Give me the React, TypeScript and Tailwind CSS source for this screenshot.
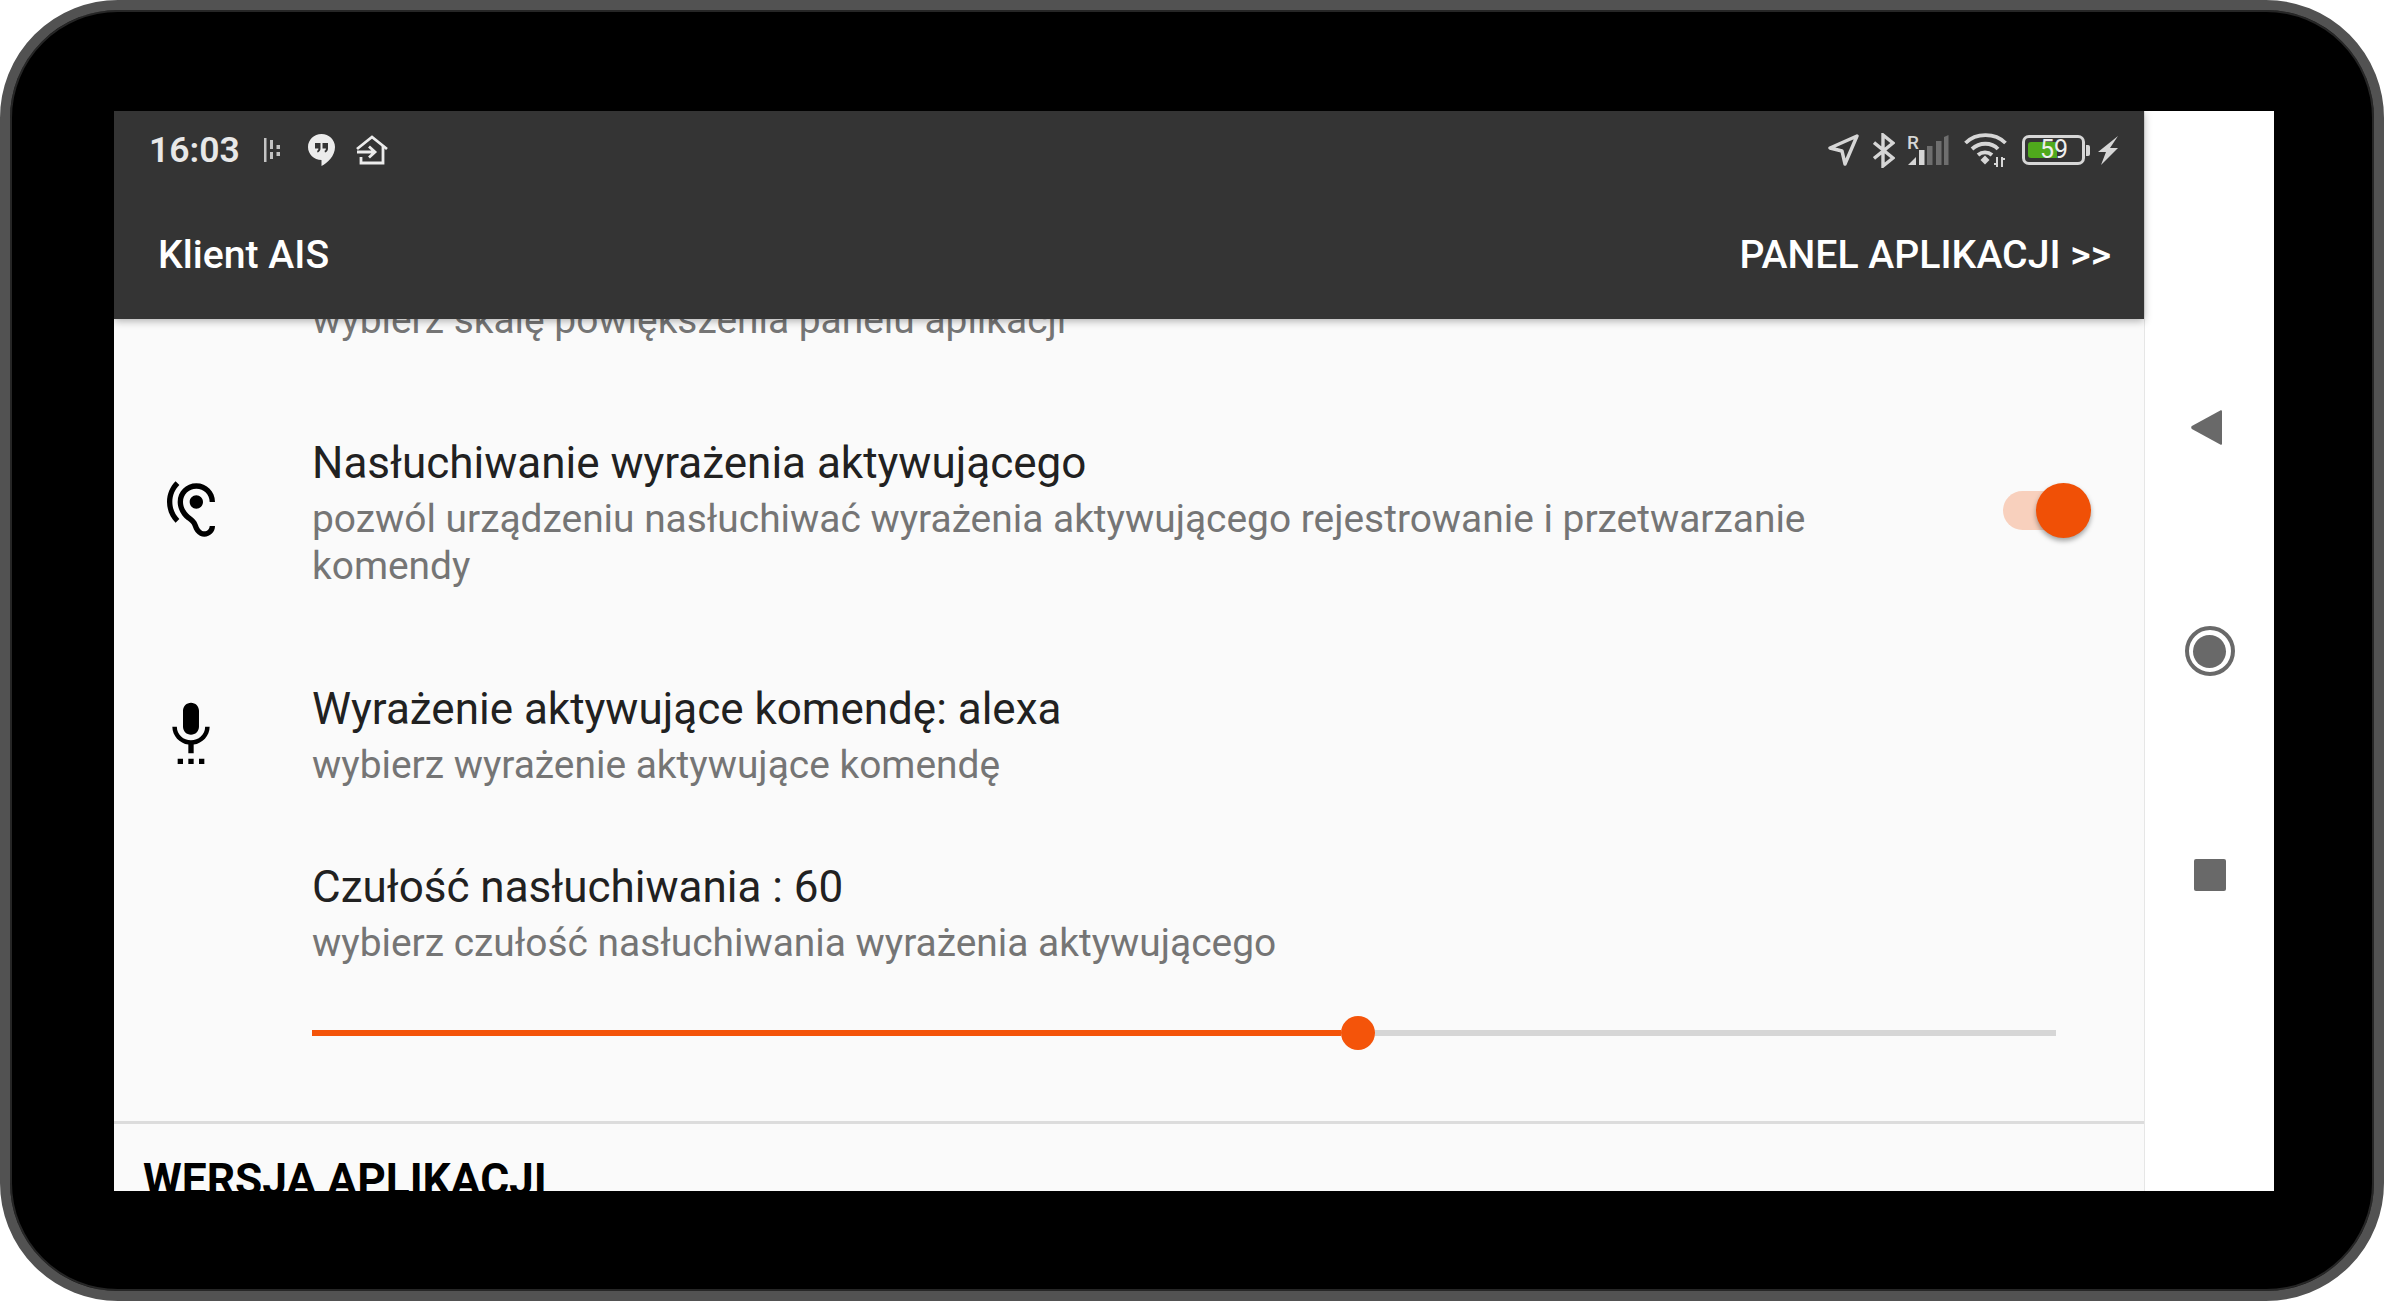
import React from "react";

const hearingPath =
  "M17 20c-.29 0-.56-.06-.76-.15-.71-.37-1.21-.88-1.71-2.38-.51-1.56-1.47-2.29-2.39-3-.79-.61-1.61-1.24-2.32-2.53C9.29 10.98 9 9.93 9 9c0-2.8 2.2-5 5-5s5 2.2 5 5h2c0-3.93-3.07-7-7-7S7 5.07 7 9c0 1.26.38 2.65 1.07 3.9.91 1.65 1.98 2.48 2.85 3.15.81.62 1.39 1.07 1.71 2.05.6 1.82 1.37 2.84 2.73 3.55.51.23 1.07.35 1.64.35 2.21 0 4-1.79 4-4h-2c0 1.1-.9 2-2 2zM7.64 2.64L6.22 1.22C4.23 3.21 3 5.96 3 9s1.23 5.79 3.22 7.78l1.41-1.41C6.01 13.74 5 11.49 5 9s1.01-4.74 2.64-6.36zM11.5 9c0 1.38 1.12 2.5 2.5 2.5s2.5-1.12 2.5-2.5-1.12-2.5-2.5-2.5-2.5 1.12-2.5 2.5z";
const voicePath =
  "M7 24h2v-2H7v2zm5-11c1.66 0 2.99-1.34 2.99-3L15 4c0-1.66-1.34-3-3-3S9 2.34 9 4v6c0 1.66 1.34 3 3 3zm-1 11h2v-2h-2v2zm4 0h2v-2h-2v2zm4-14h-1.7c0 3-2.54 5.1-5.3 5.1S6.7 13 6.7 10H5c0 3.41 2.72 6.23 6 6.72V20h2v-3.28c3.28-.49 6-3.31 6-6.72z";

function StatusLeft() {
  return (
    <div className="flex items-center">
      <span className="w-[88px] text-[35.5px] leading-[40px] font-semibold text-[#e8e8e8]">16:03</span>
      <svg width="16" height="24" viewBox="0 0 16 24" className="ml-[27px]" fill="#c4c4c4">
        <rect x="0" y="0" width="2.500" height="24" />
        <rect x="6" y="2" width="3" height="9" />
        <rect x="6" y="14" width="3" height="7" />
        <rect x="12.500" y="7" width="3.500" height="4" />
        <rect x="12.500" y="14" width="3.500" height="4" />
      </svg>
      <svg width="27" height="32" viewBox="0 0 27 32" className="ml-[28px]">
        <path d="M13.5 0C6 0 0 5.8 0 13s6 13 13.5 13v6c6-3 13.500-10 13.500-19C27 5.800 21 0 13.500 0z" fill="#ececec" />
        <path d="M7 9h5.500v5.500c0 2-1.200 3.500-3 4l-.5-1.800c1-.3 1.400-1 1.400-2.200H7zM14.500 9H20v5.500c0 2-1.200 3.500-3 4l-.5-1.800c1-.3 1.400-1 1.400-2.200h-3.400z" fill="#343434" />
      </svg>
      <svg width="32" height="30" viewBox="0 0 32 30" className="ml-[21px]" fill="none" stroke="#ececec" strokeWidth="2.800">
        <path d="M1 14 16 2l15 12" />
        <path d="M27 11v17H5v-6" />
        <path d="M1 17h17M13 11.500l6 5.500-6 5.500" />
      </svg>
    </div>
  );
}

function StatusRight() {
  return (
    <div className="flex items-center">
      <svg width="31" height="32" viewBox="0 0 31 32" fill="none" stroke="#d6d6d6" strokeWidth="3.400" strokeLinejoin="round">
        <path d="M29 2 2 14l12 3 3 13z" />
      </svg>
      <svg width="22" height="35" viewBox="0 0 22 35" className="ml-[14px]" fill="none" stroke="#d6d6d6" strokeWidth="3.400">
        <path d="M1 9.500 20 25l-10 8V2l10 8L1 25.500" />
      </svg>
      <svg width="41" height="30" viewBox="0 0 41 30" className="ml-[13px] overflow-visible">
        <path d="M0 30 8 22v8z" fill="#d6d6d6" />
        <rect x="11" y="15" width="5.500" height="15" fill="#d6d6d6" />
        <rect x="19" y="11" width="5.500" height="19" fill="#6e6e6e" />
        <rect x="28" y="6" width="5.500" height="24" fill="#6e6e6e" />
        <path d="M36 2 40.500 0v30H36z" fill="#6e6e6e" />
        <text x="-1" y="14" fontFamily="Roboto, sans-serif" fontWeight="500" fontSize="19" fill="#d6d6d6">R</text>
      </svg>
      <svg width="44" height="34" viewBox="0 0 44 34" className="ml-[15px]" fill="none" stroke="#d6d6d6" strokeWidth="3.800">
        <path d="M1.500 10C12 -.5 31-.5 41.500 10" />
        <path d="M8 16c7.500-7 19.500-7 26 0" />
        <path d="M14 22c4-3.500 10-3.500 14 0" />
        <path d="M16.500 27 21 22.500l4.500 4.500-4.500 4.500z" fill="#d6d6d6" stroke="none" />
        <path d="M33 24v10M30 31h3M38 24v10M38 26h3" strokeWidth="2" />
      </svg>
      <div className="ml-[14px] flex items-center">
        <div className="relative flex h-[30px] w-[63px] items-center rounded-[7px] border-[3.500px] border-[#d6d6d6] p-[3px]">
          <div className="h-[16px] w-[29px] rounded-l-[3px] bg-[#4fa91c]" />
          <span className="absolute top-[-1px] left-[15px] text-[25px] leading-[25px] text-[#eeeeee]">59</span>
        </div>
        <div className="ml-[1px] h-[11px] w-[4px] rounded-r-[2px] bg-[#d6d6d6]" />
      </div>
      <svg width="20" height="29" viewBox="0 0 20 29" className="ml-[8px]" fill="#d6d6d6">
        <path d="M20 0 0 16h8L3 29l17-17h-8z" />
      </svg>
    </div>
  );
}

function Row({ icon, title, summary }: { icon?: string; title: string; summary: string }) {
  return (
    <div className="flex">
      <div className="flex w-[198px] shrink-0 items-center pb-[8px] pl-[45px]">
        {icon && (
          <svg width="64" height="64" viewBox="0 0 24 24" fill="#000000">
            <path d={icon} />
          </svg>
        )}
      </div>
      <div className="w-[1540px]">
        <div className="text-[44px] leading-[50px] text-[#212121]">{title}</div>
        <div className="mt-[7px] text-[38.9px] leading-[47px] text-[#757575]">{summary}</div>
      </div>
    </div>
  );
}

export default function App() {
  return (
    <div className="h-[1301px] w-[2384px] overflow-hidden bg-white font-['Roboto',sans-serif]">
      <div className="flex h-[1301px] w-[2384px] rounded-[118px] border-[10px] border-[#525252] bg-black pt-[101px] pl-[104px] shadow-[inset_0_0_0_2px_#262626]">
        {/* screen */}
        <div className="flex h-[1080px] w-[2160px] overflow-hidden">
          <div className="flex w-[2030px] flex-col bg-[#fafafa]">
            <header className="relative z-10 h-[208px] shrink-0 bg-[#343434] shadow-[0_2px_8px_rgba(0,0,0,0.3)]">
              <div className="flex h-[78px] items-center justify-between pr-[26px] pl-[35px]">
                <StatusLeft />
                <StatusRight />
              </div>
              <div className="flex h-[130px] items-start justify-between pt-[43px] pr-[33px] pl-[44px] text-[39.2px] leading-[46px] font-medium text-white">
                <span>Klient AIS</span>
                <span>PANEL APLIKACJI &gt;&gt;</span>
              </div>
            </header>

            <div className="min-h-0 flex-1 overflow-hidden">
              <div className="mt-[-22px] pl-[198px] text-[38.9px] leading-[46px] text-[#757575]">
                wybierz skalę powiększenia panelu aplikacji
              </div>

              <div className="relative mt-[95px]">
                <Row
                  icon={hearingPath}
                  title="Nasłuchiwanie wyrażenia aktywującego"
                  summary="pozwól urządzeniu nasłuchiwać wyrażenia aktywującego rejestrowanie i przetwarzanie komendy"
                />
                {/* switch */}
                <div className="absolute top-[53px] left-[1889px] h-[39px] w-[78px] rounded-full bg-[#f8d0bd]">
                  <div className="absolute top-[-8px] left-[33px] h-[55px] w-[55px] rounded-full bg-[#f05006] shadow-[0_3px_5px_rgba(0,0,0,0.35)]" />
                </div>
              </div>

              <div className="mt-[95px]">
                <Row
                  icon={voicePath}
                  title="Wyrażenie aktywujące komendę: alexa"
                  summary="wybierz wyrażenie aktywujące komendę"
                />
              </div>

              <div className="mt-[74px]">
                <Row title="Czułość nasłuchiwania : 60" summary="wybierz czułość nasłuchiwania wyrażenia aktywującego" />
              </div>

              {/* slider */}
              <div className="mt-[50px] ml-[198px] flex h-[34px] w-[1744px] items-center">
                <div className="h-[6px] w-[1029px] bg-[#f4540a]" />
                <div className="h-[34px] w-[34px] shrink-0 rounded-full bg-[#f4540a]" />
                <div className="h-[6px] flex-1 bg-[#d6d6d6]" />
              </div>

              <div className="mt-[71px] h-[3px] bg-[#dcdcdc]" />
              <div className="mt-[33px] pl-[29px] text-[44.3px] leading-[46px] font-bold text-black">WERSJA APLIKACJI</div>
            </div>
          </div>

          {/* nav bar */}
          <div className="flex w-[130px] flex-col items-center justify-center gap-[174px] border-l border-[#e6e6e6] bg-white">
            <div className="flex h-[50px] items-center pr-[7px]">
              <svg width="31" height="37" viewBox="0 0 36 40" preserveAspectRatio="none" fill="#696969">
                <path d="M34 1.500c1-.5 2 0 2 1v35c0 1-1 1.500-2 1L1 21.500c-1-.7-1-2.300 0-3z" />
              </svg>
            </div>
            <div className="flex h-[50px] w-[50px] items-center justify-center rounded-full border-[4px] border-[#696969]">
              <div className="h-[33px] w-[33px] rounded-full bg-[#696969]" />
            </div>
            <div className="flex h-[50px] items-center">
              <div className="h-[32px] w-[32px] rounded-[2px] bg-[#696969]" />
            </div>
          </div>
        </div>
      </div>
    </div>
  );
}
